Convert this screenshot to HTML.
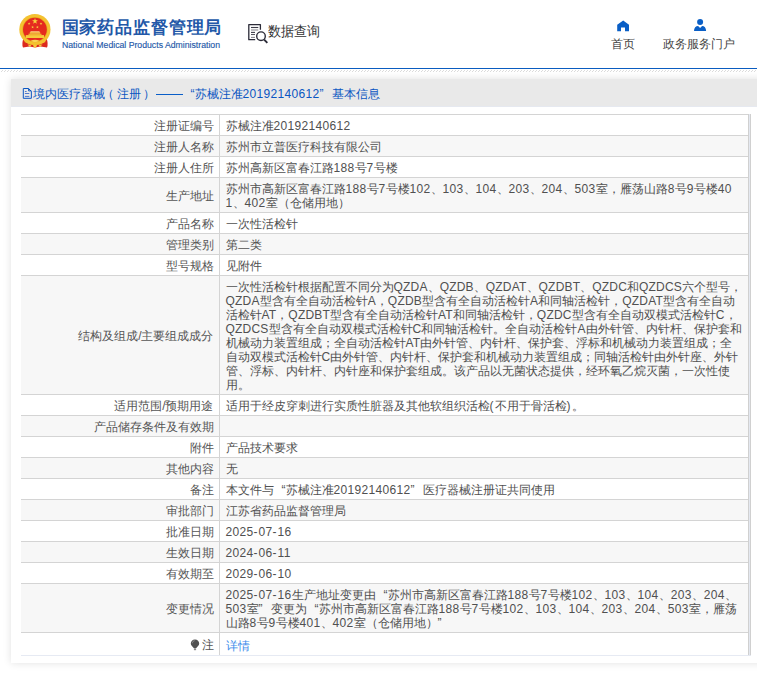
<!DOCTYPE html>
<html><head><meta charset="utf-8">
<style>
*{box-sizing:border-box}
html,body{margin:0;padding:0;background:#fff;overflow:hidden}
body{width:757px;height:674px;position:relative;font-family:"Liberation Sans",sans-serif;color:#333;font-size:12px}
i{font-style:normal;letter-spacing:0.33px}
u{text-decoration:none;letter-spacing:0.2px}
s{text-decoration:none;letter-spacing:1px}
b{font-weight:normal}
b.ql{display:inline-block;width:12px;text-align:right}
b.qr{display:inline-block;width:12px;text-align:left}
.abs{position:absolute}
#emblem{left:18px;top:13px;width:34px;height:36px}
#t1{left:61.6px;top:16.2px;font-size:17px;letter-spacing:0.85px;font-weight:bold;color:#2358a8;line-height:24px;white-space:nowrap}
#t2{left:62px;top:38.8px;font-size:9.6px;color:#2358a8;line-height:12px;white-space:nowrap;-webkit-text-stroke:0.15px #2358a8;transform:scaleX(0.906);transform-origin:0 0}
#qicon{left:247px;top:23px;width:22px;height:21px}
#qtxt{left:268px;top:22.3px;font-size:14px;color:#333;line-height:18px;white-space:nowrap;transform:scaleX(0.93);transform-origin:0 0}
.nav{position:absolute;top:36px;font-size:12px;color:#444;line-height:16px;white-space:nowrap}
#bline{left:0;top:68px;width:757px;height:1px;background:#0a5cc0}
#hatch{left:0;top:70px;width:757px;height:2px}
#box{left:11px;top:79px;width:800px;height:584px;background:#fff;box-shadow:0 0 8px rgba(0,0,0,0.12)}
#bar{left:11px;top:79px;width:800px;height:28px;background:#e9e9e9;border-bottom:1px solid #e6e9f0}
.bt{position:absolute;top:86px;font-size:12px;line-height:16px;color:#0a56c2;white-space:nowrap}
table{position:absolute;left:21px;top:114px;width:730px;border-collapse:collapse;font-size:12px;line-height:14px}
td{border-top:1px solid #d4d4d4;padding:4px 0 2px 6px;vertical-align:middle;white-space:nowrap}
td.l{width:198px;text-align:right;padding:4px 5px 2px 0;color:#555;border-right:1px solid #d4d4d4}
td.v{color:#505050;border-right:3px solid #e4e8f0;box-shadow:inset -0px 0 0 #fff}
tr:nth-child(even) td{background:#f7f7f7}
tr.last td{height:23px;padding-top:5px;padding-bottom:1px;border-bottom:1px solid #e6eaf3}
td.lk{color:#3b8beb}
tr.last td.l{padding-top:4px;padding-bottom:2px}
#rb1{left:748px;top:114px;width:1px;height:541px;background:#d0d0d0}
#rb2{left:750px;top:114px;width:1px;height:541px;background:#d0d0d0}
</style></head><body>
<svg class="abs" style="left:0;top:0" width="60" height="55" viewBox="0 0 60 55">
  <path d="M23.5 38 Q21.5 44 23 47.6 L29.5 46.6 Q35 48.2 40.5 46.6 L47 47.6 Q48.5 44 46.5 38 Z" fill="#dc2a1e"/>
  <circle cx="34.9" cy="29.5" r="15.6" fill="#f4c231"/>
  <circle cx="34.9" cy="29.6" r="12.6" fill="#e7ac1c"/>
  <circle cx="34.9" cy="29.6" r="11.9" fill="#e52b1f"/>
  <polygon points="35.00,18.10 35.73,20.19 37.95,20.24 36.19,21.59 36.82,23.71 35.00,22.45 33.18,23.71 33.81,21.59 32.05,20.24 34.27,20.19" fill="#f9d340"/><polygon points="29.10,22.30 29.45,23.21 30.43,23.27 29.67,23.89 29.92,24.83 29.10,24.30 28.28,24.83 28.53,23.89 27.77,23.27 28.75,23.21" fill="#f9d340"/><polygon points="41.00,22.30 41.35,23.21 42.33,23.27 41.57,23.89 41.82,24.83 41.00,24.30 40.18,24.83 40.43,23.89 39.67,23.27 40.65,23.21" fill="#f9d340"/><polygon points="32.60,25.80 32.95,26.71 33.93,26.77 33.17,27.39 33.42,28.33 32.60,27.80 31.78,28.33 32.03,27.39 31.27,26.77 32.25,26.71" fill="#f9d340"/><polygon points="37.40,25.80 37.75,26.71 38.73,26.77 37.97,27.39 38.22,28.33 37.40,27.80 36.58,28.33 36.83,27.39 36.07,26.77 37.05,26.71" fill="#f9d340"/>
  <rect x="30.5" y="31.3" width="9" height="1" fill="#fbe08a"/>
  <rect x="29.8" y="32.2" width="10.4" height="1.5" fill="#f7cf4e"/>
  <rect x="28.5" y="33.7" width="13" height="1.4" fill="#eeb32e"/>
  <rect x="25.8" y="35.1" width="18.2" height="2.9" fill="#f6cb3c"/>
  <path d="M25 40.5 Q35 46.5 45 40.5 L45.5 42 Q35 48 24.5 42 Z" fill="#f4c231"/>
  <path d="M30.5 40.8 Q35 38.6 39.5 40.8 Q35 43.5 30.5 40.8 Z" fill="#f9d556"/>
  <path d="M27.5 44.5 L30 47 L31.5 44.8 Z M42.5 44.5 L40 47 L38.5 44.8 Z M33 45 H37 L36 47.5 H34 Z" fill="#f6cb3c"/>
</svg>
<div id="t1" class="abs">国家药品监督管理局</div>
<div id="t2" class="abs">National Medical Products Administration</div>
<svg class="abs" style="left:244px;top:20px" width="28" height="26" viewBox="0 0 28 26">
  <path d="M11.2 19.7 H4.8 V4.6 H16.4 V9.7" fill="none" stroke="#2b2b38" stroke-width="1.3" stroke-linejoin="round"/>
  <path d="M7 7.5 H14.3" stroke="#3c3c48" stroke-width="1.1"/>
  <path d="M7 10 H14.3" stroke="#8a8a92" stroke-width="1.1"/>
  <path d="M7 12.4 H11" stroke="#3c3c48" stroke-width="1.1"/>
  <path d="M7 14.5 H11" stroke="#55555f" stroke-width="1.1"/>
  <path d="M7 17.4 H11" stroke="#8a8a92" stroke-width="1.1"/>
  <circle cx="17" cy="16.2" r="4.3" fill="none" stroke="#2b2b38" stroke-width="1.4"/>
  <path d="M20.2 19.6 L23.3 22.9" stroke="#2b2b38" stroke-width="1.9"/>
</svg>
<div id="qtxt" class="abs">数据查询</div>
<svg class="abs" style="left:617px;top:19.5px" width="13" height="12" viewBox="0 0 13 12"><path d="M6.2 0.4 L12 4.7 V11.3 H8 V7.4 H4 V11.3 H0.2 V4.7 Z" fill="#0a5fc6"/></svg>
<div class="nav" style="left:611px">首页</div>
<svg class="abs" style="left:694px;top:18px" width="13" height="14" viewBox="0 0 13 14"><circle cx="6.1" cy="4.1" r="3" fill="#0a5fc6"/><path d="M0 13.1 C0 9.6 1.8 7.9 4.1 7.9 L6.1 10 L8.1 7.9 C10.4 7.9 12.1 9.6 12.1 13.1 Z" fill="#0a5fc6"/></svg>
<div class="nav" style="left:663px">政务服务门户</div>
<div id="bline" class="abs"></div>
<svg id="hatch" class="abs" width="757" height="2"><defs><pattern id="hp" width="3" height="2" patternUnits="userSpaceOnUse"><rect x="2" y="0" width="1" height="1" fill="#dcdcdc"/><rect x="1" y="1" width="1" height="1" fill="#dcdcdc"/></pattern></defs><rect width="757" height="2" fill="url(#hp)"/></svg>
<div id="box" class="abs"></div>
<div id="bar" class="abs"></div>
<svg class="abs" style="left:22px;top:87px" width="11" height="13" viewBox="0 0 11 13"><path d="M1.3 1.5 H6.5 L9.35 4.3 V11.3 H1.3 Z" fill="none" stroke="#0a56c2" stroke-width="1"/><path d="M6.6 1.5 V3.9 H9.35" fill="none" stroke="#0a56c2" stroke-width="1"/><path d="M2.9 4.5 H4.6 M2.9 6.5 H7.3 M2.9 9.4 H7.3" stroke="#3a6ac8" stroke-width="0.9"/></svg>
<div class="bt" style="left:32.8px">境内医疗器械</div>
<div class="bt" style="left:102.3px">（</div>
<div class="bt" style="left:117px">注册</div>
<div class="bt" style="left:143.3px">）</div>
<div class="abs" style="left:156px;top:94px;width:27px;height:1px;background:#0a5ec8"></div>
<div class="bt" style="left:182.5px"><b class="ql">“</b>苏械注准<i>20192140612</i><b class="qr">”</b></div>
<div class="bt" style="left:332px">基本信息</div>
<table>
<tr><td class="l">注册证编号</td><td class="v">苏械注准<i>20192140612</i></td></tr>
<tr><td class="l">注册人名称</td><td class="v">苏州市立普医疗科技有限公司</td></tr>
<tr><td class="l">注册人住所</td><td class="v">苏州高新区富春江路<i>188</i>号<i>7</i>号楼</td></tr>
<tr><td class="l">生产地址</td><td class="v">苏州市高新区富春江路<i>188</i>号<i>7</i>号楼<i>102</i>、<i>103</i>、<i>104</i>、<i>203</i>、<i>204</i>、<i>503</i>室，雁荡山路<i>8</i>号<i>9</i>号楼<i>40</i><br><i>1</i>、<i>402</i>室（仓储用地）</td></tr>
<tr><td class="l">产品名称</td><td class="v">一次性活检针</td></tr>
<tr><td class="l">管理类别</td><td class="v">第二类</td></tr>
<tr><td class="l">型号规格</td><td class="v">见附件</td></tr>
<tr><td class="l">结构及组成/主要组成成分</td><td class="v">一次性活检针根据配置不同分为<u>QZDA</u>、<u>QZDB</u>、<u>QZDAT</u>、<u>QZDBT</u>、<u>QZDC</u>和<u>QZDCS</u>六个型号，<br><u>QZDA</u>型含有全自动活检针<u>A</u>，<u>QZDB</u>型含有全自动活检针<u>A</u>和同轴活检针，<u>QZDAT</u>型含有全自动<br>活检针<u>AT</u>，<u>QZDBT</u>型含有全自动活检针<u>AT</u>和同轴活检针，<u>QZDC</u>型含有全自动双模式活检针<u>C</u>，<br><u>QZDCS</u>型含有全自动双模式活检针<u>C</u>和同轴活检针。全自动活检针<u>A</u>由外针管、内针杆、保护套和<br>机械动力装置组成；全自动活检针<u>AT</u>由外针管、内针杆、保护套、浮标和机械动力装置组成；全<br>自动双模式活检针<u>C</u>由外针管、内针杆、保护套和机械动力装置组成；同轴活检针由外针座、外针<br>管、浮标、内针杆、内针座和保护套组成。该产品以无菌状态提供，经环氧乙烷灭菌，一次性使<br>用。</td></tr>
<tr><td class="l">适用范围/预期用途</td><td class="v">适用于经皮穿刺进行实质性脏器及其他软组织活检<s>(</s>不用于骨活检<s>)</s>。</td></tr>
<tr><td class="l">产品储存条件及有效期</td><td class="v"></td></tr>
<tr><td class="l">附件</td><td class="v">产品技术要求</td></tr>
<tr><td class="l">其他内容</td><td class="v">无</td></tr>
<tr><td class="l">备注</td><td class="v">本文件与<b class="ql">“</b>苏械注准<i>20192140612</i><b class="qr">”</b>医疗器械注册证共同使用</td></tr>
<tr><td class="l">审批部门</td><td class="v">江苏省药品监督管理局</td></tr>
<tr><td class="l">批准日期</td><td class="v"><i>2025</i><s>-</s><i>07</i><s>-</s><i>16</i></td></tr>
<tr><td class="l">生效日期</td><td class="v"><i>2024</i><s>-</s><i>06</i><s>-</s><i>11</i></td></tr>
<tr><td class="l">有效期至</td><td class="v"><i>2029</i><s>-</s><i>06</i><s>-</s><i>10</i></td></tr>
<tr><td class="l">变更情况</td><td class="v"><i>2025</i><s>-</s><i>07</i><s>-</s><i>16</i>生产地址变更由<b class="ql">“</b>苏州市高新区富春江路<i>188</i>号<i>7</i>号楼<i>102</i>、<i>103</i>、<i>104</i>、<i>203</i>、<i>204</i>、<br><i>503</i>室<b class="qr">”</b>变更为<b class="ql">“</b>苏州市高新区富春江路<i>188</i>号<i>7</i>号楼<i>102</i>、<i>103</i>、<i>104</i>、<i>203</i>、<i>204</i>、<i>503</i>室，雁荡<br>山路<i>8</i>号<i>9</i>号楼<i>401</i>、<i>402</i>室（仓储用地）<b class="qr">”</b></td></tr>
<tr class="last"><td class="l"><svg width="10" height="12" viewBox="0 0 10 12" style="vertical-align:-2px;margin-right:2px"><path d="M5 0.4 C7.5 0.4 9.2 2.1 9.2 4.5 C9.2 6.6 7.2 7.6 5.9 9.6 H4.1 C2.8 7.6 0.8 6.6 0.8 4.5 C0.8 2.1 2.5 0.4 5 0.4 Z" fill="#505050"/><path d="M2.3 4.2 C2.4 2.9 3.3 1.9 4.6 1.7" stroke="#9a9a9a" stroke-width="0.9" fill="none"/><rect x="3.9" y="10" width="2.2" height="1.2" fill="#8a8a8a"/></svg>注</td><td class="v lk">详情</td></tr>
</table>
<div id="rb1" class="abs"></div>
<div id="rb2" class="abs"></div>
</body></html>
